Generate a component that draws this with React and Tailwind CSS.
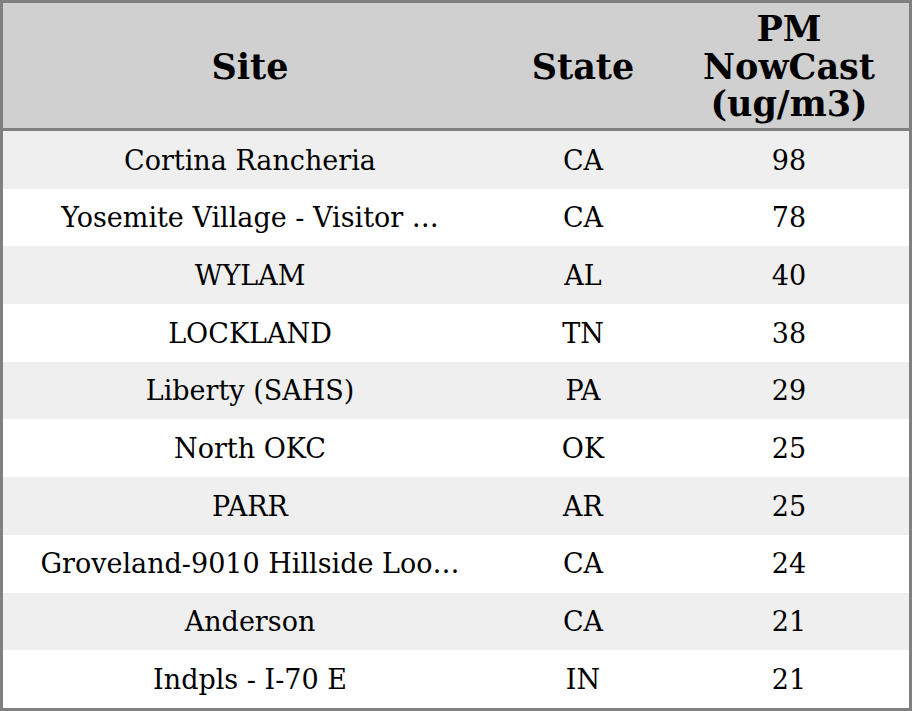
import React from "react";

const rows = [
  ["Cortina Rancheria", "CA", "98"],
  ["Yosemite Village - Visitor …", "CA", "78"],
  ["WYLAM", "AL", "40"],
  ["LOCKLAND", "TN", "38"],
  ["Liberty (SAHS)", "PA", "29"],
  ["North OKC", "OK", "25"],
  ["PARR", "AR", "25"],
  ["Groveland-9010 Hillside Loo…", "CA", "24"],
  ["Anderson", "CA", "21"],
  ["Indpls - I-70 E", "IN", "21"],
];

export default function App() {
  return (
    <div
      className="w-[912px] h-[711px] border-[3px] border-[#808080] bg-white text-black flex flex-col"
      style={{ fontFamily: '"DejaVu Serif", serif' }}
    >
      <div className="h-[128px] shrink-0 bg-[#d0d0d0] border-b-[3px] border-[#808080] grid grid-cols-[494px_172px_240px] items-center text-center font-bold text-[35px] leading-[37.5px]">
        <div className="pt-[2px]">Site</div>
        <div className="pt-[2px]">State</div>
        <div className="pt-[2px]">
          PM
          <br />
          NowCast
          <br />
          (ug/m3)
        </div>
      </div>
      {rows.map((r, i) => (
        <div
          key={i}
          className={`h-[57.7px] shrink-0 grid grid-cols-[494px_172px_240px] items-center text-center text-[27px] ${
            i % 2 === 0 ? "bg-[#efefef]" : "bg-white"
          }`}
        >
          <div className="whitespace-nowrap pt-[2px]">{r[0]}</div>
          <div className="pt-[2px]">{r[1]}</div>
          <div className="pt-[2px]">{r[2]}</div>
        </div>
      ))}
    </div>
  );
}
